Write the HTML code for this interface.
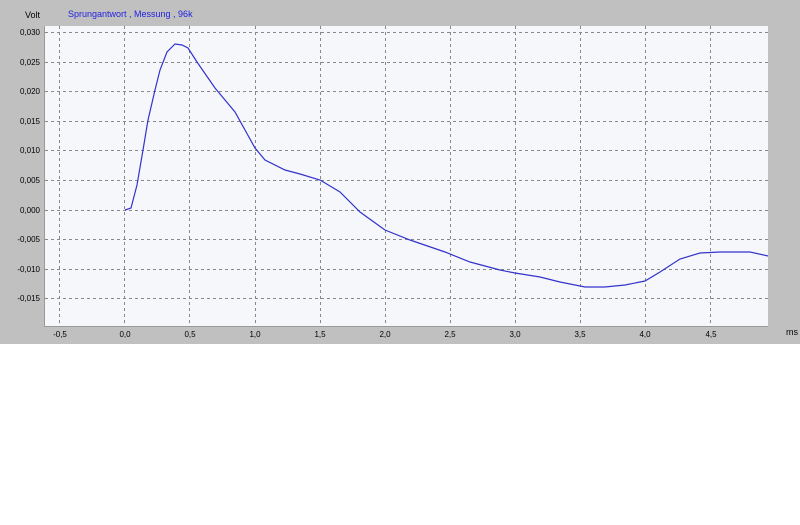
<!DOCTYPE html>
<html><head><meta charset="utf-8"><style>
html,body{margin:0;padding:0;background:#fff;width:800px;height:525px;overflow:hidden}
</style></head><body>
<svg width="800" height="525" xmlns="http://www.w3.org/2000/svg" style="display:block">
<rect x="0" y="0" width="800" height="344" fill="#c0c0c0"/>
<rect x="45" y="26" width="723" height="300" fill="#f5f7fa"/>
<line x1="45" y1="326.5" x2="768" y2="326.5" stroke="#999" stroke-width="1"/>
<line x1="44.5" y1="26" x2="44.5" y2="327" stroke="#999" stroke-width="1"/>
<g stroke="#888" stroke-width="1" stroke-dasharray="3,3" fill="none">
<line x1="45" x2="768" y1="32.5" y2="32.5"/>
<line x1="45" x2="768" y1="62.5" y2="62.5"/>
<line x1="45" x2="768" y1="91.5" y2="91.5"/>
<line x1="45" x2="768" y1="121.5" y2="121.5"/>
<line x1="45" x2="768" y1="150.5" y2="150.5"/>
<line x1="45" x2="768" y1="180.5" y2="180.5"/>
<line x1="45" x2="768" y1="210.5" y2="210.5"/>
<line x1="45" x2="768" y1="239.5" y2="239.5"/>
<line x1="45" x2="768" y1="269.5" y2="269.5"/>
<line x1="45" x2="768" y1="298.5" y2="298.5"/>
<line y1="26" y2="326" x1="59.5" x2="59.5"/>
<line y1="26" y2="326" x1="124.5" x2="124.5"/>
<line y1="26" y2="326" x1="189.5" x2="189.5"/>
<line y1="26" y2="326" x1="255.5" x2="255.5"/>
<line y1="26" y2="326" x1="320.5" x2="320.5"/>
<line y1="26" y2="326" x1="385.5" x2="385.5"/>
<line y1="26" y2="326" x1="450.5" x2="450.5"/>
<line y1="26" y2="326" x1="515.5" x2="515.5"/>
<line y1="26" y2="326" x1="580.5" x2="580.5"/>
<line y1="26" y2="326" x1="645.5" x2="645.5"/>
<line y1="26" y2="326" x1="710.5" x2="710.5"/>
</g>
<polyline fill="none" stroke="#3333cc" stroke-width="1.2" points="125,210 131,208 137,185 143,150 148,120 155,90 160,70 167,52 175,44 182,45 188,48 197,62 215,88 235,112 245,130 255,148 265,160 285,170 300,174 320,180 340,192 360,212 385,230 410,240 445,252 470,262 500,270 515,273 540,277 560,282 585,287 605,287 625,285 645,281 660,272 680,259 700,253 720,252 750,252 768,256"/>
<g font-family="Liberation Sans, sans-serif" font-size="8" fill="#000">
<text x="25" y="18" font-size="9">Volt</text>
<text x="68" y="17" font-size="9" fill="#2222dd">Sprungantwort , Messung , 96k</text>
<g text-anchor="end">
<text x="40" y="35">0,030</text>
<text x="40" y="65">0,025</text>
<text x="40" y="94">0,020</text>
<text x="40" y="124">0,015</text>
<text x="40" y="153">0,010</text>
<text x="40" y="183">0,005</text>
<text x="40" y="213">0,000</text>
<text x="40" y="242">-0,005</text>
<text x="40" y="272">-0,010</text>
<text x="40" y="301">-0,015</text>
</g>
<g text-anchor="middle">
<text x="60" y="337">-0,5</text>
<text x="125" y="337">0,0</text>
<text x="190" y="337">0,5</text>
<text x="255" y="337">1,0</text>
<text x="320" y="337">1,5</text>
<text x="385" y="337">2,0</text>
<text x="450" y="337">2,5</text>
<text x="515" y="337">3,0</text>
<text x="580" y="337">3,5</text>
<text x="645" y="337">4,0</text>
<text x="711" y="337">4,5</text>
</g>
<text x="786" y="335" font-size="9">ms</text>
</g>
</svg>
</body></html>
